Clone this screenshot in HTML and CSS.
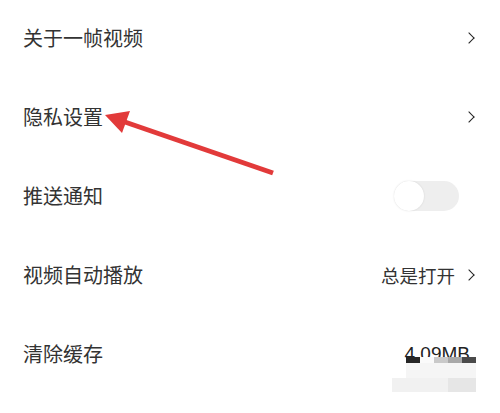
FILE: index.html
```html
<!DOCTYPE html>
<html lang="zh-CN">
<head>
    <meta charset="UTF-8">
    <meta name="viewport" content="width=device-width, initial-scale=1.0">
    <title>设置</title>
    <link rel="stylesheet" href="styles.css">
</head>
<body>
    <ul class="settings">
        <li class="row">
            <span class="label">关于一帧视频</span>
            <span class="chevron"></span>
        </li>
        <li class="row">
            <span class="label">隐私设置</span>
            <span class="chevron"></span>
        </li>
        <li class="row">
            <span class="label">推送通知</span>
            <span class="switch"><span class="knob"></span></span>
        </li>
        <li class="row">
            <span class="label">视频自动播放</span>
            <span class="value">总是打开</span>
            <span class="chevron"></span>
        </li>
        <li class="row">
            <span class="label">清除缓存</span>
            <span class="size">4.09MB</span>
        </li>
    </ul>

    <!-- mosaic watermark in the corner -->
    <div class="mosaic">
        <i class="m0"></i><i class="m1"></i><i class="m2"></i><i class="m3"></i><i class="m4"></i><i class="m5"></i>
        <i class="m0"></i><i class="m6"></i><i class="m6"></i><i class="m6"></i><i class="m6"></i><i class="m6"></i>
        <i class="m7"></i><i class="m7"></i><i class="m7"></i><i class="m7"></i><i class="m8"></i><i class="m8"></i>
    </div>

    <!-- red annotation arrow -->
    <svg class="arrow" width="500" height="413" viewBox="0 0 500 413">
        <line x1="273" y1="173" x2="122" y2="121" stroke="#e23a3a" stroke-width="5" stroke-linecap="butt"/>
        <polygon points="105,115 130,111 122,133" fill="#e23a3a"/>
    </svg>
</body>
</html>
```

FILE: styles.css
```css
body {
    margin: 0;
    background: #fff;
    font-family: "Noto Sans CJK SC", "Noto Sans", sans-serif;
    color: #333;
    position: relative;
    width: 500px;
    height: 413px;
    overflow: hidden;
}
.settings {
    list-style: none;
    margin: -2px 0 0;
    padding: 0;
}
.row {
    display: flex;
    align-items: center;
    height: 79px;
    padding: 0 24px 0 23px;
}
.label {
    flex: 1;
    font-size: 20px;
    line-height: 24px;
}
.value {
    font-size: 18.5px;
    line-height: 24px;
    margin-right: 10px;
}
.chevron {
    width: 7px;
    height: 7px;
    border-top: 1.8px solid #222;
    border-right: 1.8px solid #222;
    transform: rotate(45deg);
    margin-right: 3px;
}
.switch {
    width: 65px;
    height: 30px;
    border-radius: 15px;
    background: #eeeeee;
    display: flex;
    align-items: center;
    margin-right: 17px;
}
.knob {
    width: 30px;
    height: 30px;
    border-radius: 50%;
    background: #fff;
    box-shadow: 0 0 2px rgba(0, 0, 0, 0.12);
}
.size {
    font-family: "Liberation Sans", sans-serif;
    font-size: 19px;
    color: #222;
    margin-right: 6px;
}
.mosaic {
    position: absolute;
    left: 392px;
    top: 357px;
    display: grid;
    grid-template-columns: repeat(6, 14px);
    grid-template-rows: 6px 15px 14px;
}
.mosaic i { display: block; }
.m0 { background: transparent; }
.m1 { background: #262626; }
.m2 { background: #fafafa; }
.m3 { background: #c9c9c9; }
.m4 { background: #a8a8a8; }
.m5 { background: #4a4a4a; }
.m6 { background: #f5f5f5; }
.m7 { background: #f1f1f1; }
.m8 { background: #e6e6e6; }
.arrow {
    position: absolute;
    left: 0;
    top: 0;
}
```
